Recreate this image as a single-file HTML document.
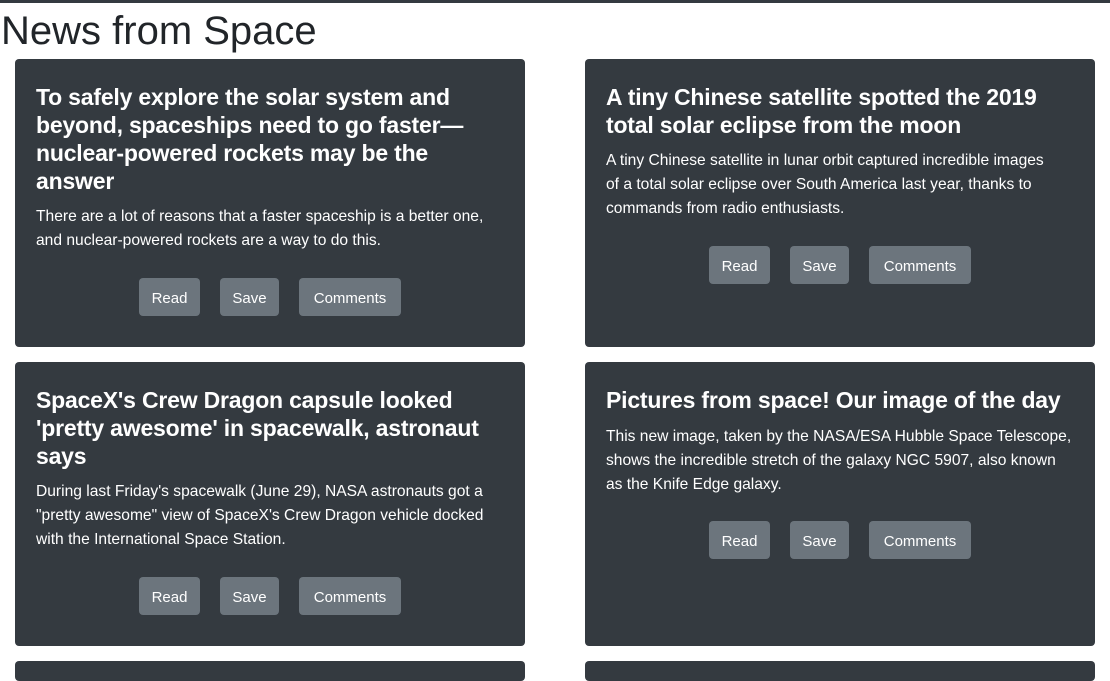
<!DOCTYPE html>
<html><head><meta charset="utf-8"><style>
*{margin:0;padding:0;box-sizing:border-box}
body{width:1110px;height:664px;overflow:hidden;background:#fff;font-family:"Liberation Sans",sans-serif;position:relative;color:#212529}
.bar{position:absolute;left:0;top:0;width:1110px;height:3px;background:#343a40}
h1{position:absolute;left:1px;top:8px;font-size:40px;font-weight:400;line-height:46px;white-space:nowrap;letter-spacing:0px}
.card{position:absolute;width:510px;background:#343a40;border-radius:4px}
.t{position:absolute;left:21px;color:#fff;font-size:23px;font-weight:bold;line-height:28px;white-space:nowrap;letter-spacing:-0.2px}
.p{position:absolute;left:21px;color:#fff;font-size:15.6px;line-height:24px;white-space:nowrap}
.btn{position:absolute;height:38px;background:#6c757d;color:#fff;border-radius:4px;font-size:15px;line-height:41px;text-align:center}
</style></head><body>
<div class="bar"></div>
<h1>News from Space</h1>

<div class="card" style="left:15px;top:59px;height:288px">
<div class="t" style="top:24px">To safely explore the solar system and<br>beyond, spaceships need to go faster—<br>nuclear-powered rockets may be the<br>answer</div>
<div class="p" style="top:146px">There are a lot of reasons that a faster spaceship is a better one,<br>and nuclear-powered rockets are a way to do this.</div>
<div class="btn" style="left:124px;top:219px;width:61px">Read</div>
<div class="btn" style="left:205px;top:219px;width:59px">Save</div>
<div class="btn" style="left:284px;top:219px;width:102px">Comments</div>
</div>

<div class="card" style="left:585px;top:59px;height:288px">
<div class="t" style="top:24px">A tiny Chinese satellite spotted the 2019<br>total solar eclipse from the moon</div>
<div class="p" style="top:90px">A tiny Chinese satellite in lunar orbit captured incredible images<br>of a total solar eclipse over South America last year, thanks to<br>commands from radio enthusiasts.</div>
<div class="btn" style="left:124px;top:187px;width:61px">Read</div>
<div class="btn" style="left:205px;top:187px;width:59px">Save</div>
<div class="btn" style="left:284px;top:187px;width:102px">Comments</div>
</div>

<div class="card" style="left:15px;top:362px;height:284px">
<div class="t" style="top:24px">SpaceX's Crew Dragon capsule looked<br>'pretty awesome' in spacewalk, astronaut<br>says</div>
<div class="p" style="top:118px">During last Friday's spacewalk (June 29), NASA astronauts got a<br>"pretty awesome" view of SpaceX's Crew Dragon vehicle docked<br>with the International Space Station.</div>
<div class="btn" style="left:124px;top:215px;width:61px">Read</div>
<div class="btn" style="left:205px;top:215px;width:59px">Save</div>
<div class="btn" style="left:284px;top:215px;width:102px">Comments</div>
</div>

<div class="card" style="left:585px;top:362px;height:284px">
<div class="t" style="top:24px">Pictures from space! Our image of the day</div>
<div class="p" style="top:63px">This new image, taken by the NASA/ESA Hubble Space Telescope,<br>shows the incredible stretch of the galaxy NGC 5907, also known<br>as the Knife Edge galaxy.</div>
<div class="btn" style="left:124px;top:159px;width:61px">Read</div>
<div class="btn" style="left:205px;top:159px;width:59px">Save</div>
<div class="btn" style="left:284px;top:159px;width:102px">Comments</div>
</div>

<div class="card" style="left:15px;top:661px;height:20px"></div>
<div class="card" style="left:585px;top:661px;height:20px"></div>
</body></html>
